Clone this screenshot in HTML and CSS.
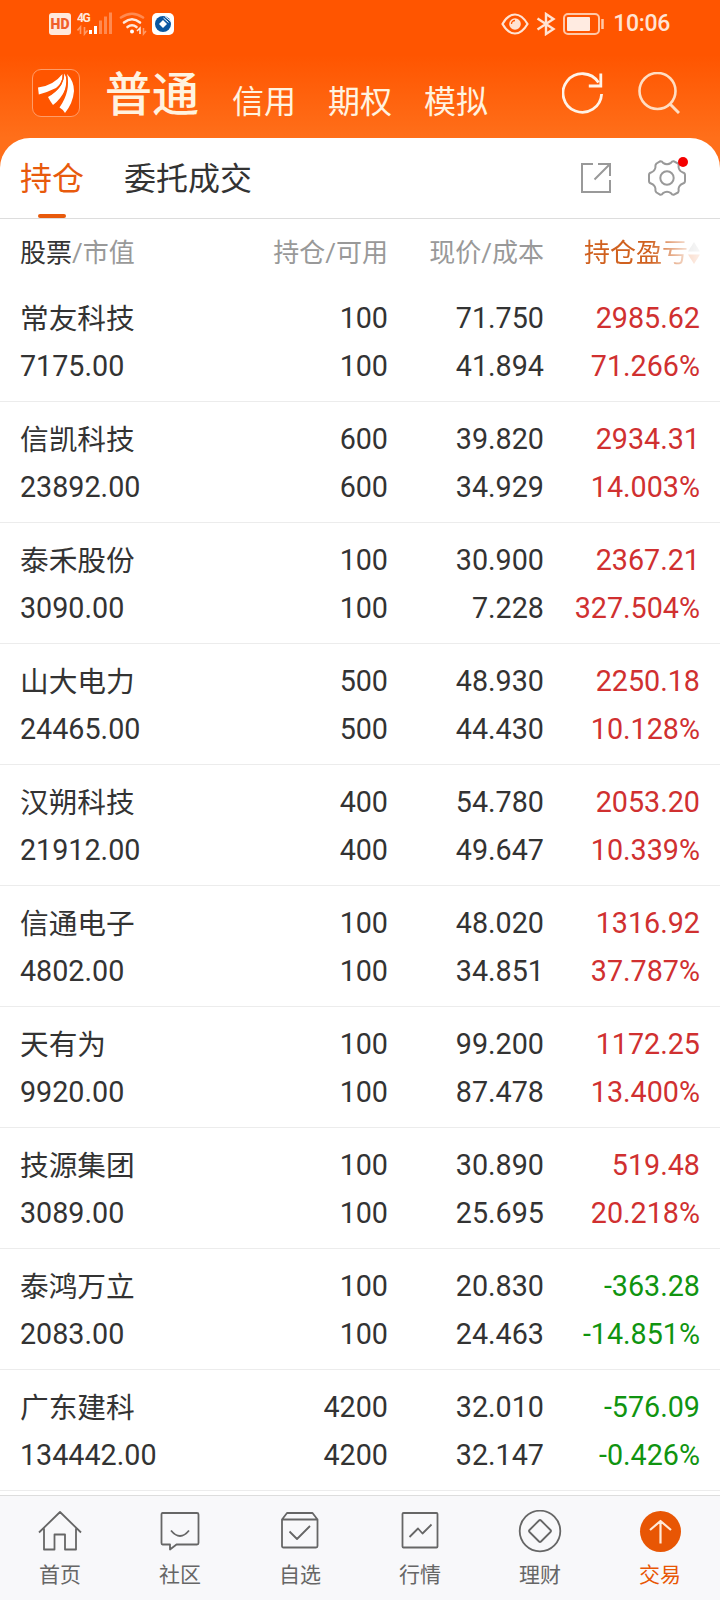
FILE: index.html
```html
<!DOCTYPE html>
<html lang="zh-CN">
<head>
  <meta charset="UTF-8" />
  <meta name="viewport" content="width=device-width, initial-scale=1.0" />
  <title>持仓</title>
  <link rel="stylesheet" href="styles.css">
</head>
<body>
  <header class="top">
    <div class="status-bar">
      <div class="status-left">
        <span class="hd">HD</span>
        <svg class="signal" width="36" height="24" viewBox="0 0 36 24">
          <text x="0" y="10" class="net">4G</text>
          <g stroke-width="3">
            <path d="M13.5 18v4M18.5 14v8" stroke="#fff" />
            <path d="M23.5 8.500v13.500M28.500 4.500v17.500M33.500 0.500v21.500" stroke="#ff8a50" />
          </g>
          <path d="M3.500 22v-7l-3 3.500M7.500 15v7l3-3.500" stroke="#ff9a66" stroke-width="1.600" fill="none" />
        </svg>
        <svg class="wifi" width="28" height="24" viewBox="0 0 28 24" fill="none" stroke-width="2.600" stroke-linecap="round">
          <path d="M2 5.500Q13 -2 24 5.500" stroke="#ff8a50" />
          <path d="M5 10.500Q13 4 21 10.500M8.500 15Q13 11.500 17.500 15" stroke="#ffe9dc" />
          <circle cx="13" cy="19.500" r="2" fill="#fff" stroke="none" />
          <path d="M21 22v-6l-3 3" stroke="#ffe9dc" stroke-width="1.500" stroke-linecap="butt" />
          <path d="M24.500 16v6l2.500-3" stroke="#ff9a66" stroke-width="1.500" stroke-linecap="butt" />
        </svg>
        <svg class="bank" width="22" height="22" viewBox="0 0 22 22">
          <rect width="22" height="22" rx="5" fill="#fff" />
          <circle cx="11" cy="11" r="8" fill="#0b57a0" />
          <path d="M11 7l4 4-4 4-4-4z" fill="#fff" />
          <path d="M13 3.500l6 5M11.500 5l5 4.500" stroke="#fff" stroke-width="1" />
        </svg>
      </div>
      <div class="status-right">
        <svg width="28" height="22" viewBox="0 0 28 22" fill="none" stroke="#ffe3d3" stroke-width="2.200">
          <path d="M1.500 11Q7 1.500 14 1.500T26.500 11Q21 20.500 14 20.500T1.500 11z" />
          <circle cx="14" cy="11" r="5.800" fill="#ffe3d3" stroke="none" />
          <path d="M10.500 11a3.500 3.500 0 0 1 3.500-3.500" stroke="#ff5a05" stroke-width="1.300" />
        </svg>
        <svg class="bt" width="20" height="24" viewBox="0 0 20 24" fill="none" stroke="#ffe3d3" stroke-width="2.400">
          <path d="M1.500 6.500l16 10.500L10 22V2L17.500 7l-16 10.500" />
        </svg>
        <svg class="battery" width="42" height="22" viewBox="0 0 42 22">
          <rect x="1" y="1" width="35" height="20" rx="4" fill="none" stroke="#ffc8a8" stroke-width="2" />
          <rect x="4" y="4" width="23" height="14" rx="1" fill="#ffebe1" />
          <path d="M39.500 6v10" stroke="#ffc8a8" stroke-width="2.500" />
        </svg>
        <span class="time">10:06</span>
      </div>
    </div>
    <div class="nav-bar">
      <svg class="logo" width="48" height="48" viewBox="0 0 48 48">
        <rect x=".5" y=".5" width="47" height="47" rx="8.500" fill="#ff5500" stroke="#ff9c68" />
        <path d="M6 18.500Q21 17 30.500 5Q31.500 14 24 19Q16 23 6.800 25.500Z" fill="#fff" />
        <path d="M16 28Q32 19 32.300 4.500Q36.500 11 33.500 20Q29 30 21 36Q18 32 16 28Z" fill="#fff" />
        <path d="M27.500 38.500Q39 22 35 5Q42 12 42 22Q41 34 33 44Q30.500 40 27.500 38.500Z" fill="#fff" />
        <path d="M31.500 4Q32 16 19 25M34 4Q38 20 25 37" fill="none" stroke="#ff5500" stroke-width="1.300" />
      </svg>
      <h1 class="account on">普通</h1>
      <span class="account">信用</span>
      <span class="account">期权</span>
      <span class="account">模拟</span>
      <div class="nav-icons">
        <svg width="42" height="42" viewBox="0 0 42 42" fill="none" stroke="#fff3e8" stroke-width="2.800">
          <path d="M39.600 22A19.300 19.300 0 1 1 36.500 10.500" />
          <path d="M38.800 1.500v12.500h-12" />
        </svg>
        <svg width="42" height="42" viewBox="0 0 42 42" fill="none" stroke="#ffddc2" stroke-width="2.600">
          <circle cx="19.500" cy="19" r="18" />
          <path d="M32 32l9 9" stroke-width="3" />
        </svg>
      </div>
    </div>
  </header>

  <main class="panel">
    <div class="tabs">
      <span class="tab active">持仓</span>
      <span class="tab">委托成交</span>
      <div class="tab-icons">
        <svg width="32" height="32" viewBox="0 0 32 32" fill="none" stroke="#999" stroke-width="2">
          <path d="M13 2H2v28h28V18M18 2h12v12M30 2L14.500 17.500" />
        </svg>
        <span class="settings">
          <svg width="38" height="36" viewBox="0 0 38 36" fill="none" stroke="#999" stroke-width="2" stroke-linejoin="round">
            <path d="M8.500 3.500L12 1.300Q14 1 15 2.800Q19 5.500 23 2.800Q24 1 26 1.300L30 3.500Q31 5 30.500 7Q31 11 35 12.500Q37 13 37 15V21Q37 23 35 23.500Q31 25 30.500 29Q31 31 30 32.500L26 34.700Q24 35 23 33.200Q19 30.500 15 33.200Q14 35 12 34.700L8.500 32.500Q7 31 7.500 29Q7 25 3 23.500Q1 23 1 21V15Q1 13 3 12.500Q7 11 7.500 7Q7 5 8.500 3.500Z" />
            <circle cx="19" cy="18" r="6.700" />
          </svg>
          <i class="dot"></i>
        </span>
      </div>
    </div>

    <div class="head">
      <span><b>股票</b>/市值</span>
      <span>持仓/可用</span>
      <span>现价/成本</span>
      <span class="sort">持仓盈亏<svg width="12" height="22" viewBox="0 0 12 22"><path d="M0 9.500L6 0l6 9.500z" fill="#aaa" /><path d="M0 12.500l6 9.500 6-9.500z" fill="#e85a0c" /></svg></span>
    </div>

    <ul class="list" id="list"></ul>
  </main>

  <nav class="bottom">
    <a class="item">
      <svg width="44" height="44" viewBox="0 0 44 44">
        <path d="M1 22.500L22 2l21 20.500M6 18.500V39.500H16.500V24.500H27V39.500H38V18.500" />
      </svg>
      <span>首页</span>
    </a>
    <a class="item">
      <svg width="44" height="44" viewBox="0 0 44 44">
        <path d="M4.500 3h34.500q1.500 0 1.500 1.500V33q0 1.500-1.500 1.500H18.500l-6.500 5v-5H4.500Q3.500 34.500 3.500 33V4.500Q3.500 3 4.500 3zM13 20.500q9 11 18 0" />
      </svg>
      <span>社区</span>
    </a>
    <a class="item">
      <svg width="44" height="44" viewBox="0 0 44 44">
        <path d="M4 9.500h35.500V36q0 1.500-1.500 1.500H5.500Q4 37.500 4 36zL9 3h25.500l5 6.500M11.500 21.500l7.500 7.500L32 16" />
      </svg>
      <span>自选</span>
    </a>
    <a class="item">
      <svg width="44" height="44" viewBox="0 0 44 44">
        <rect x="4.500" y="3" width="35" height="34.500" rx="1" />
        <path d="M11.500 27l8.500-8.500 4.500 5 9-9" />
      </svg>
      <span>行情</span>
    </a>
    <a class="item">
      <svg width="44" height="44" viewBox="0 0 44 44">
        <circle cx="22" cy="21" r="20.300" />
        <path d="M21 10.500q1-1 2 0l9.500 9.500q1 1 0 2l-9.500 9.500q-1 1-2 0l-9.500-9.500q-1-1 0-2z" />
      </svg>
      <span>理财</span>
    </a>
    <a class="item current">
      <svg width="44" height="44" viewBox="0 0 44 44">
        <circle class="disc" cx="22.500" cy="21.500" r="20.500" />
        <path class="arrow" d="M22.500 33.500V11M12 20L22.500 11 33 20" />
      </svg>
      <span>交易</span>
    </a>
  </nav>

  <script>
    // name, market value, held, available, price, cost, profit, profit %
    const stocks = [
      ["常友科技", "7175.00", "100", "100", "71.750", "41.894", "2985.62", "71.266%"],
      ["信凯科技", "23892.00", "600", "600", "39.820", "34.929", "2934.31", "14.003%"],
      ["泰禾股份", "3090.00", "100", "100", "30.900", "7.228", "2367.21", "327.504%"],
      ["山大电力", "24465.00", "500", "500", "48.930", "44.430", "2250.18", "10.128%"],
      ["汉朔科技", "21912.00", "400", "400", "54.780", "49.647", "2053.20", "10.339%"],
      ["信通电子", "4802.00", "100", "100", "48.020", "34.851", "1316.92", "37.787%"],
      ["天有为", "9920.00", "100", "100", "99.200", "87.478", "1172.25", "13.400%"],
      ["技源集团", "3089.00", "100", "100", "30.890", "25.695", "519.48", "20.218%"],
      ["泰鸿万立", "2083.00", "100", "100", "20.830", "24.463", "-363.28", "-14.851%"],
      ["广东建科", "134442.00", "4200", "4200", "32.010", "32.147", "-576.09", "-0.426%"]
    ];
    document.getElementById("list").innerHTML = stocks.map(s => {
      const dir = s[6].startsWith("-") ? "down" : "up";
      return `<li class="row">
        <div><p class="name">${s[0]}</p><p class="value">${s[1]}</p></div>
        <div>${s[2]}<br>${s[3]}</div>
        <div>${s[4]}<br>${s[5]}</div>
        <div class="${dir}">${s[6]}<br>${s[7]}</div>
      </li>`;
    }).join("");
  </script>
</body>
</html>
```

FILE: styles.css
```css
* {
  box-sizing: border-box;
  margin: 0;
  padding: 0;
}
body {
  width: 720px;
  height: 1600px;
  overflow: hidden;
  display: flex;
  flex-direction: column;
  font-family: Roboto, "Noto Sans CJK SC", sans-serif;
  color: #333;
  background: #fff;
}
svg {
  display: block;
  flex: none;
}
.top {
  height: 168px;
  flex: none;
  background: linear-gradient(#ff5500 55px, #ff6f1a 138px);
}
.status-bar {
  height: 48px;
  padding: 0 50px 0 49px;
  display: flex;
  justify-content: space-between;
  align-items: center;
}
.status-left, .status-right {
  display: flex;
  align-items: center;
}
.hd {
  width: 22px;
  height: 22px;
  border-radius: 3px;
  background: #ffe9dc;
  color: #f0602a;
  font-size: 14px;
  font-weight: 900;
  line-height: 22px;
  text-align: center;
}
.signal {
  margin-left: 6px;
}
.net {
  font-size: 12px;
  font-weight: 700;
  fill: #ffe9dc;
  letter-spacing: -1.500px;
}
.wifi {
  margin-left: 6px;
}
.bank {
  margin-left: 5px;
}
.bt {
  margin-left: 7px;
}
.battery {
  margin-left: 7px;
}
.time {
  margin-left: 8px;
  font-size: 23px;
  font-weight: 500;
  line-height: 50px;
  letter-spacing: -.300px;
  color: #ffe3d3;
}
.nav-bar {
  height: 90px;
  padding: 0 40px 0 32px;
  display: flex;
  align-items: center;
}
.account {
  margin-left: 32px;
  padding-top: 17px;
  font-size: 32px;
  line-height: 48px;
  color: #fff3e0;
}
.account.on {
  margin: 0 1px 0 25px;
  padding: 3px 0 0;
  font-size: 47px;
  font-weight: 500;
  line-height: 90px;
}
.nav-icons {
  margin-left: auto;
  display: flex;
  gap: 34px;
}
.panel {
  flex: 1;
  min-height: 0;
  margin-top: -30px;
  background: #fff;
  border-radius: 30px 30px 0 0;
}
.tabs {
  height: 81px;
  padding: 0 34px 0 20px;
  display: flex;
  align-items: center;
  gap: 40px;
  border-bottom: 1px solid #ddd;
}
.tab {
  position: relative;
  padding-top: 3px;
  font-size: 32px;
  line-height: 77px;
}
.tab.active {
  color: #e85a0c;
}
.tab.active::after {
  content: "";
  position: absolute;
  left: 18px;
  bottom: 0;
  width: 28px;
  height: 4px;
  border-radius: 2px;
  background: #e85a0c;
}
.tab-icons {
  margin-left: auto;
  display: flex;
  align-items: center;
  gap: 36px;
}
.settings {
  position: relative;
}
.dot {
  position: absolute;
  top: -3px;
  right: -2px;
  width: 10px;
  height: 10px;
  border-radius: 50%;
  background: #f40000;
}
.head, .row {
  display: grid;
  grid-template-columns: 220px 148px 156px 156px;
  padding: 0 20px;
  text-align: right;
}
.head > :first-child, .row > :first-child {
  text-align: left;
}
.head {
  height: 62px;
  font-size: 26px;
  line-height: 68px;
  color: #999;
}
.head b {
  font-weight: 400;
  color: #333;
}
.sort {
  display: flex;
  justify-content: flex-end;
  align-items: center;
  color: #d0611f;
  -webkit-mask-image: linear-gradient(to right, #000 68%, rgba(0, 0, 0, .2) 92%, rgba(0, 0, 0, .1));
  mask-image: linear-gradient(to right, #000 68%, rgba(0, 0, 0, .2) 92%, rgba(0, 0, 0, .1));
}
.list {
  list-style: none;
}
.row {
  height: 121px;
  padding-top: 13px;
  border-bottom: 1px solid #ececec;
  font-size: 28.700px;
  line-height: 48px;
}
.name {
  line-height: 50px;
}
.value {
  line-height: 44px;
}
.up {
  color: #d03030;
}
.down {
  color: #109410;
}
.bottom {
  height: 105px;
  flex: none;
  display: flex;
  background: #f8f8fa;
  border-top: 1px solid #ddd;
}
.item {
  flex: 1;
  padding-top: 14px;
  display: flex;
  flex-direction: column;
  align-items: center;
  font-size: 21px;
  line-height: 42px;
  color: #666;
}
.item svg {
  fill: none;
  stroke: #666;
  stroke-width: 1.800;
  stroke-linejoin: round;
}
.item.current {
  color: #e85604;
}
.item .disc {
  fill: #e85604;
  stroke: none;
}
.item .arrow {
  stroke: #ffe9d8;
  stroke-width: 2.200;
}
```
